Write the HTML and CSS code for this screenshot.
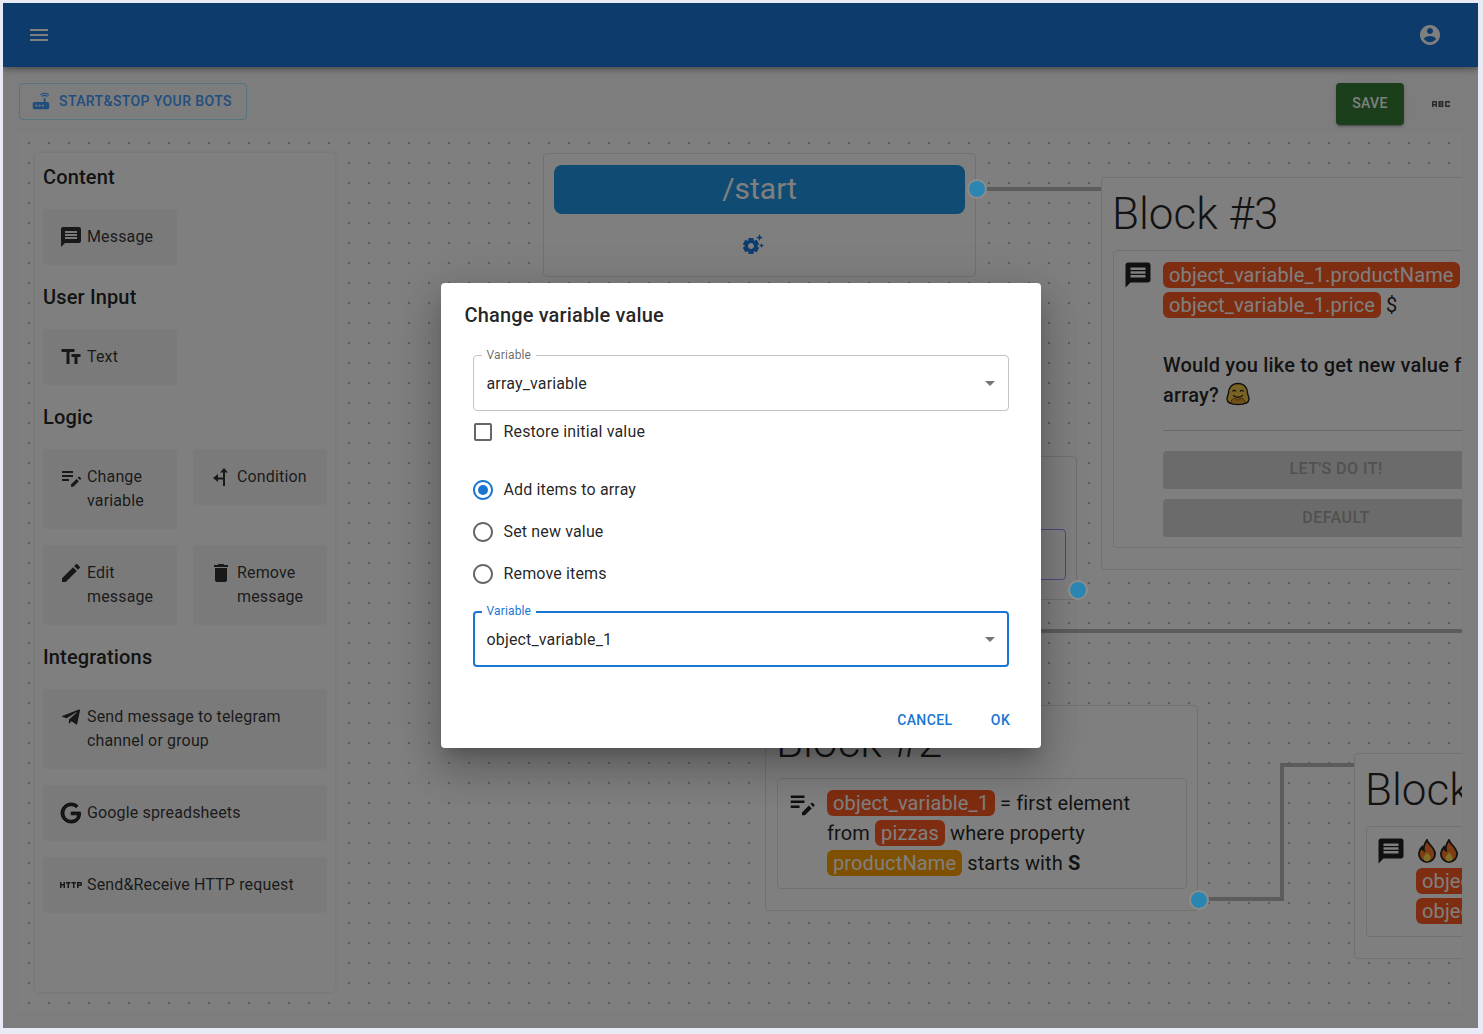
FILE: index.html
```html
<!DOCTYPE html>
<html lang="en">

<head>
    <meta charset="UTF-8">
    <meta name="viewport" content="width=device-width, initial-scale=1.0">
    <title>Bot Builder</title>
    <link rel="stylesheet" href="styles.css">
</head>

<body>
    <!-- icon sprite -->
    <svg class="sprite">
        <symbol id="i-menu" viewBox="0 0 24 24"><path d="M3 18h18v-2H3v2zm0-5h18v-2H3v2zm0-7v2h18V6H3z"/></symbol>
        <symbol id="i-account" viewBox="0 0 24 24"><path d="M12 2C6.48 2 2 6.48 2 12s4.48 10 10 10 10-4.48 10-10S17.52 2 12 2zm0 3c1.66 0 3 1.34 3 3s-1.34 3-3 3-3-1.34-3-3 1.34-3 3-3zm0 14.2c-2.5 0-4.71-1.28-6-3.22.03-1.99 4-3.08 6-3.08 1.99 0 5.97 1.09 6 3.08-1.29 1.94-3.5 3.22-6 3.22z"/></symbol>
        <symbol id="i-router" viewBox="0 0 24 24"><path d="M20.2 5.9l.8-.8C19.6 3.7 17.8 3 16 3s-3.6.7-5 2.1l.8.8C13 4.8 14.5 4.2 16 4.2s3 .6 4.2 1.7zm-.9.8c-.9-.9-2.1-1.4-3.3-1.4s-2.4.5-3.3 1.4l.8.8c.7-.7 1.6-1 2.5-1 .9 0 1.8.3 2.5 1l.8-.8zM19 13h-2V9h-2v4H5c-1.1 0-2 .9-2 2v4c0 1.1.9 2 2 2h14c1.1 0 2-.9 2-2v-4c0-1.1-.9-2-2-2zM8 18H6v-2h2v2zm3.5 0h-2v-2h2v2zm3.5 0h-2v-2h2v2z"/></symbol>
        <symbol id="i-abc" viewBox="0 0 24 24"><path d="M21 11h-1.5v-.5h-2v3h2V13H21v1c0 .55-.45 1-1 1h-3c-.55 0-1-.45-1-1v-4c0-.55.45-1 1-1h3c.55 0 1 .45 1 1v1zM8 10v5H6.5v-1.5h-2V15H3v-5c0-.55.45-1 1-1h3c.55 0 1 .45 1 1zm-1.5.5h-2V12h2v-1.5zm7 1.5c.55 0 1 .45 1 1v1c0 .55-.45 1-1 1h-4V9h4c.55 0 1 .45 1 1v1c0 .55-.45 1-1 1zM11 10.5v.75h2v-.75h-2zm2 2.25h-2v.75h2v-.75z"/></symbol>
        <symbol id="i-message" viewBox="0 0 24 24"><path d="M20 2H4c-1.1 0-1.99.9-1.99 2L2 22l4-4h14c1.1 0 2-.9 2-2V4c0-1.1-.9-2-2-2zm-2 12H6v-2h12v2zm0-3H6V9h12v2zm0-3H6V6h12v2z"/></symbol>
        <symbol id="i-text" viewBox="0 0 24 24"><path d="M2.5 4v3h5v12h3V7h5V4h-13zm19 5h-9v3h3v7h3v-7h3V9z"/></symbol>
        <symbol id="i-editnote" viewBox="0 0 24 24"><path d="M3 10h11v2H3v-2zm0-4h11v2H3V6zm0 8h7v2H3v-2zm15.7-1.2l.7-.7c.4-.4 1-.4 1.4 0l.9.9c.4.4.4 1 0 1.4l-.7.7-2.3-2.3zm-1.2 1.2l2.3 2.3-5.5 5.5H12v-2.3l5.5-5.5z"/></symbol>
        <symbol id="i-condition" viewBox="0 0 24 24"><path d="M14 21V7.5h-3L15 3l4 4.5h-3V21h-2zm0-6.5H9V17l-5-4 5-4v3.5h5v2z"/></symbol>
        <symbol id="i-edit" viewBox="0 0 24 24"><path d="M3 17.25V21h3.75L17.81 9.94l-3.75-3.75L3 17.25zM20.71 7.04c.39-.39.39-1.02 0-1.41l-2.34-2.34c-.39-.39-1.02-.39-1.41 0l-1.83 1.83 3.75 3.75 1.83-1.83z"/></symbol>
        <symbol id="i-delete" viewBox="0 0 24 24"><path d="M6 19c0 1.1.9 2 2 2h8c1.1 0 2-.9 2-2V7H6v12zM19 4h-3.5l-1-1h-5l-1 1H5v2h14V4z"/></symbol>
        <symbol id="i-telegram" viewBox="0 0 24 24"><path d="M9.78 18.65l.28-4.23 7.68-6.92c.34-.31-.07-.46-.52-.19L7.74 13.3 3.64 12c-.88-.25-.89-.86.2-1.3l15.97-6.16c.73-.33 1.43.18 1.15 1.3l-2.72 12.81c-.19.91-.74 1.13-1.5.71L12.6 16.3l-1.99 1.93c-.23.23-.42.42-.83.42z"/></symbol>
        <symbol id="i-google" viewBox="0 0 24 24"><path d="M21.35 11.1h-9.17v2.73h6.51c-.33 3.81-3.5 5.44-6.5 5.44C8.36 19.27 5 16.25 5 12c0-4.1 3.2-7.27 7.2-7.27 3.09 0 4.9 1.97 4.9 1.97L19 4.72S16.56 2 12.1 2C6.42 2 2.03 6.8 2.03 12c0 5.05 4.13 10 10.22 10 5.35 0 9.25-3.67 9.25-9.09 0-1.15-.15-1.81-.15-1.81z" stroke="currentColor" stroke-width="1"/></symbol>
        <symbol id="i-http" viewBox="0 0 24 24"><path d="M4.5 11h-2V9H1v6h1.5v-2.5h2V15H6V9H4.5v2zm2.5-.5h1.5V15H10v-4.5h1.5V9H7v1.5zm5.5 0H14V15h1.5v-4.5H17V9h-4.5v1.5zm9-1.5H18v6h1.5v-2h2c.8 0 1.5-.7 1.5-1.5v-1c0-.8-.7-1.5-1.5-1.5zm0 2.5h-2v-1h2v1z"/></symbol>
        <symbol id="i-gears" viewBox="0 0 24 24"><path d="M17.41 6.59 15 5.5l2.41-1.09L18.5 2l1.09 2.41L22 5.5l-2.41 1.09L18.5 9l-1.09-2.41zm3.87 6.13L20.5 11l-.78 1.72-1.72.78 1.72.78.78 1.72.78-1.72L23 13.5l-1.72-.78zm-5.04 1.65 1.94 1.47-2.5 4.33-2.24-.94c-.2.13-.42.26-.64.37l-.3 2.4h-5l-.3-2.41c-.22-.11-.43-.23-.64-.37l-2.24.94-2.5-4.33 1.94-1.47c-.01-.11-.01-.24-.01-.37s0-.26.01-.37l-1.94-1.47 2.5-4.33 2.24.94c.2-.13.42-.26.64-.37L7.5 6h5l.3 2.41c.22.11.43.23.64.37l2.24-.94 2.5 4.33-1.94 1.47c.01.12.01.24.01.37s0 .25-.01.36zM13 14c0-1.66-1.34-3-3-3s-3 1.34-3 3 1.34 3 3 3 3-1.34 3-3z"/></symbol>
        <symbol id="i-arrow" viewBox="0 0 24 24"><path d="M7 10l5 5 5-5z"/></symbol>
        <symbol id="i-checkbox" viewBox="0 0 24 24"><path d="M19 5v14H5V5h14m0-2H5c-1.1 0-2 .9-2 2v14c0 1.1.9 2 2 2h14c1.1 0 2-.9 2-2V5c0-1.1-.9-2-2-2z"/></symbol>
        <symbol id="i-radio" viewBox="0 0 24 24"><path d="M12 2C6.48 2 2 6.48 2 12s4.48 10 10 10 10-4.48 10-10S17.52 2 12 2zm0 18c-4.42 0-8-3.58-8-8s3.58-8 8-8 8 3.58 8 8-3.58 8-8 8z"/></symbol>
        <symbol id="i-radio-on" viewBox="0 0 24 24"><path d="M12 2C6.48 2 2 6.48 2 12s4.48 10 10 10 10-4.48 10-10S17.52 2 12 2zm0 18c-4.42 0-8-3.58-8-8s3.58-8 8-8 8 3.58 8 8-3.58 8-8 8z"/><circle cx="12" cy="12" r="5"/></symbol>
        <symbol id="i-fire" viewBox="1 0 18 24">
            <path d="M10 1c1 4 7 7 8 13 .6 5-3.5 9-8 9s-8.6-4-8-9c.4-3 2-5 3-6 .3 2 1 3 2 3.5C6 8 8 4 10 1z" fill="#ff7a2a" stroke="#222" stroke-width="1.8"/>
            <path d="M10 13c1 2 4 4 3.5 6.5-.4 2-2 3-3.5 3s-3.2-1-3.5-3C6.2 17 9 15.5 10 13z" fill="#ffe04a"/>
        </symbol>
        <symbol id="i-hug" viewBox="0 0 24 24">
            <path d="M12 1.5C6 1.5 2.5 5.5 2.5 11c0 1.500-1.500 3.500-1.500 6 0 3.500 4 5.500 11 5.500s11-2 11-5.500c0-2.500-1.500-4.500-1.500-6 0-5.500-3.500-9.500-9.500-9.500z" fill="#f6c846" stroke="#222" stroke-width="1.4"/>
            <path d="M6.500 9.500c1-1.500 2.500-1.500 3.500 0M14 9.500c1-1.500 2.500-1.500 3.500 0M7 13c2 3 8 3 10 0" fill="none" stroke="#222" stroke-width="1.300"/>
            <path d="M5 21c0-3 1.500-4.500 3.500-4.500 2 0 3.500 1 3.500 2 0-1 1.500-2 3.500-2 2 0 3.500 1.500 3.500 4.500" fill="#e0a030" stroke="#8a5c10" stroke-width="1"/>
        </symbol>
    </svg>

    <div class="app">
        <header class="appbar">
            <svg class="icon"><use href="#i-menu"/></svg>
            <svg class="icon"><use href="#i-account"/></svg>
        </header>

        <div class="toolbar">
            <button class="bots-btn"><svg class="icon"><use href="#i-router"/></svg>Start&amp;Stop your bots</button>
            <div class="toolbar-right">
                <button class="save-btn">Save</button>
                <svg class="icon abc"><use href="#i-abc"/></svg>
            </div>
        </div>

        <main class="canvas">
            <aside class="panel">
                <h3 class="panel-title">Content</h3>
                <div class="panel-grid">
                    <div class="tool"><svg class="icon"><use href="#i-message"/></svg><span>Message</span></div>
                </div>

                <h3 class="panel-title">User Input</h3>
                <div class="panel-grid">
                    <div class="tool"><svg class="icon"><use href="#i-text"/></svg><span>Text</span></div>
                </div>

                <h3 class="panel-title">Logic</h3>
                <div class="panel-grid">
                    <div class="tool"><svg class="icon"><use href="#i-editnote"/></svg><span>Change variable</span></div>
                    <div class="tool"><svg class="icon"><use href="#i-condition"/></svg><span>Condition</span></div>
                    <div class="tool"><svg class="icon"><use href="#i-edit"/></svg><span>Edit message</span></div>
                    <div class="tool"><svg class="icon"><use href="#i-delete"/></svg><span>Remove message</span></div>
                </div>

                <h3 class="panel-title">Integrations</h3>
                <div class="panel-grid">
                    <div class="tool wide"><svg class="icon"><use href="#i-telegram"/></svg><span>Send message to telegram channel or group</span></div>
                    <div class="tool wide"><svg class="icon"><use href="#i-google"/></svg><span>Google spreadsheets</span></div>
                    <div class="tool wide"><svg class="icon"><use href="#i-http"/></svg><span>Send&amp;Receive HTTP request</span></div>
                </div>
            </aside>

            <!-- connectors between the nodes -->
            <svg class="wires" width="1443" height="879">
                <path d="M966 56H1082"/>
                <path d="M1022 498H1443"/>
                <path d="M1180 766H1263V632H1335"/>
            </svg>

            <section class="node node-start">
                <div class="start-cmd">/start</div>
                <div class="start-icon"><svg class="icon"><use href="#i-gears"/></svg></div>
                <span class="handle handle-start"></span>
            </section>

            <section class="node node-hidden">
                <div class="selected-card"></div>
                <span class="handle handle-hidden"></span>
            </section>

            <section class="node node-3">
                <h2 class="node-title">Block #3</h2>
                <div class="card">
                    <svg class="icon card-icon"><use href="#i-message"/></svg>
                    <div class="card-body">
                        <span class="chip">object_variable_1.productName</span>
                        <span class="chip">object_variable_1.price</span> $<br><br>
                        <b>Would you like to get new value from array?</b>
                        <svg class="hug"><use href="#i-hug"/></svg>
                        <hr class="divider">
                        <div class="reply-btn">Let's do it!</div>
                        <div class="reply-btn">Default</div>
                    </div>
                </div>
            </section>

            <section class="node node-2">
                <h2 class="node-title">Block #2</h2>
                <div class="card">
                    <svg class="icon card-icon"><use href="#i-editnote"/></svg>
                    <div class="card-body">
                        <span class="chip">object_variable_1</span> = first element from
                        <span class="chip">pizzas</span> where property
                        <span class="chip chip-yellow">productName</span> starts with <b class="heavy">S</b>
                    </div>
                </div>
                <span class="handle handle-bottom"></span>
            </section>

            <section class="node node-4">
                <h2 class="node-title">Block #4</h2>
                <div class="card">
                    <svg class="icon card-icon"><use href="#i-message"/></svg>
                    <div class="card-body">
                        <svg class="fire"><use href="#i-fire"/></svg><svg class="fire"><use href="#i-fire"/></svg><svg class="fire"><use href="#i-fire"/></svg><br>
                        <span class="chip">object_variable_1.productName</span><br>
                        <span class="chip">object_variable_1.price</span>
                    </div>
                </div>
            </section>
        </main>

        <div class="overlay">
            <div class="dialog">
                <h2 class="dialog-title">Change variable value</h2>
                <div class="dialog-content">
                    <div class="field">
                        <label class="field-label">Variable</label>
                        <span>array_variable</span>
                        <svg class="icon field-arrow"><use href="#i-arrow"/></svg>
                    </div>

                    <div class="option">
                        <svg class="icon"><use href="#i-checkbox"/></svg>
                        <span>Restore initial value</span>
                    </div>

                    <div class="radios">
                        <div class="option">
                            <svg class="icon on"><use href="#i-radio-on"/></svg>
                            <span>Add items to array</span>
                        </div>
                        <div class="option">
                            <svg class="icon"><use href="#i-radio"/></svg>
                            <span>Set new value</span>
                        </div>
                        <div class="option">
                            <svg class="icon"><use href="#i-radio"/></svg>
                            <span>Remove items</span>
                        </div>
                    </div>

                    <div class="field focused">
                        <label class="field-label">Variable</label>
                        <span>object_variable_1</span>
                        <svg class="icon field-arrow"><use href="#i-arrow"/></svg>
                    </div>
                </div>
                <div class="dialog-actions">
                    <button class="text-btn">Cancel</button>
                    <button class="text-btn">Ok</button>
                </div>
            </div>
        </div>
    </div>
</body>

</html>
```

FILE: styles.css
```css
* {
    box-sizing: border-box;
}

body {
    margin: 0;
    padding: 3px 5px 6px 3px;
    background-color: #e8eaf6;
    font-family: Roboto, "Liberation Sans", sans-serif;
    font-size: 16px;
    letter-spacing: 0.00938em;
    color: rgba(0, 0, 0, 0.87);
}

button {
    font-family: inherit;
    cursor: pointer;
}

.sprite {
    display: none;
}

.icon {
    display: block;
    flex: none;
    width: 24px;
    height: 24px;
    fill: currentColor;
}

.app {
    position: relative;
    display: flex;
    flex-direction: column;
    height: 1025px;
    overflow: hidden;
    background-color: #fafafa;
}

/* top bar */
.appbar {
    display: flex;
    flex: none;
    align-items: center;
    justify-content: space-between;
    height: 64px;
    padding: 0 36px 0 24px;
    background-color: #1976d8;
    color: #fff;
    box-shadow: 0 2px 4px -1px rgba(0, 0, 0, 0.2), 0 4px 5px 0 rgba(0, 0, 0, 0.14), 0 1px 10px 0 rgba(0, 0, 0, 0.12);
}

.toolbar {
    display: flex;
    flex: none;
    justify-content: space-between;
    height: 66px;
    padding: 16px 25px 0 16px;
}

.bots-btn {
    display: flex;
    align-items: center;
    gap: 7px;
    width: 228px;
    height: 37px;
    padding: 0 0 2px 10px;
    background: none;
    border: 1px solid #a8e8ff;
    border-radius: 4px;
    color: #3f9cff;
    font-size: 14px;
    font-weight: 500;
    letter-spacing: 0.02857em;
    text-transform: uppercase;
}

.bots-btn .icon {
    width: 22px;
    height: 22px;
}

.toolbar-right {
    display: flex;
    align-items: flex-start;
    gap: 25px;
}

.save-btn {
    width: 68px;
    height: 42px;
    padding: 0 0 2px;
    background-color: #367f36;
    border: none;
    border-radius: 4px;
    color: #fff;
    font-size: 14px;
    font-weight: 500;
    letter-spacing: 0.02857em;
    text-transform: uppercase;
    box-shadow: 0 3px 1px -2px rgba(0, 0, 0, 0.2), 0 2px 2px 0 rgba(0, 0, 0, 0.14), 0 1px 5px 0 rgba(0, 0, 0, 0.12);
}

.abc {
    margin-top: 9px;
    color: #555;
}

/* editor canvas */
.canvas {
    position: relative;
    flex: 1;
    margin: 0 16px 16px;
    padding: 20px 16px;
    overflow: hidden;
    background-color: #fff;
    background-image: radial-gradient(circle, #bbb 0.9px, transparent 1.1px);
    background-size: 20px 20px;
}

.panel {
    width: 300px;
    height: 839px;
    padding: 8px;
    background-color: #fff;
    border-radius: 4px;
    box-shadow: 0 0 4px rgba(0, 0, 0, 0.12);
}

.panel-title {
    margin: 0 0 16px;
    font-size: 20px;
    font-weight: 500;
    line-height: 32px;
    letter-spacing: 0.0075em;
}

.panel-grid {
    display: grid;
    grid-template-columns: 134px 134px;
    gap: 16px;
    align-items: start;
    margin-bottom: 16px;
}

.tool {
    display: flex;
    gap: 4px;
    padding: 16px;
    background-color: #f5f5f5;
    border-radius: 4px;
    color: rgba(0, 0, 0, 0.8);
    line-height: 24px;
}

.tool.wide {
    grid-column: span 2;
}

.wires {
    position: absolute;
    top: 0;
    left: 0;
    fill: none;
    stroke: #b8b8b8;
    stroke-width: 4;
}

/* nodes of the diagram */
.node {
    position: absolute;
    width: 433px;
    padding: 12px 11px 21px;
    background-color: #fff;
    border: 1px solid #e2e2e2;
    border-radius: 4px;
}

.node-start {
    top: 20px;
    left: 524px;
    height: 124px;
    padding: 11px 10px;
}

.node-hidden {
    top: 323px;
    left: 625px;
    padding-top: 72px;
    padding-bottom: 19px;
}

.node-3 {
    top: 44px;
    left: 1082px;
}

.node-2 {
    top: 572px;
    left: 746px;
}

.node-4 {
    top: 620px;
    left: 1335px;
}

.start-cmd {
    height: 49px;
    background-color: #2196e8;
    border-radius: 8px;
    color: #fff;
    font-size: 30px;
    line-height: 47px;
    letter-spacing: 0;
    text-align: center;
}

.start-icon {
    display: flex;
    justify-content: center;
    margin-top: 18px;
    padding-right: 14px;
    color: #1a78e0;
}

.selected-card {
    width: 410px;
    height: 51px;
    border: 1px solid #9090ff;
    border-radius: 4px;
}

.node-title {
    margin: 0 0 12px -1px;
    font-size: 44px;
    font-weight: 300;
    line-height: 48px;
    letter-spacing: 0;
    white-space: nowrap;
}

.card {
    display: flex;
    gap: 10px;
    width: 410px;
    padding: 9px 13px 10px 9px;
    border: 1px solid #e2e2e2;
    border-radius: 4px;
    font-size: 20px;
    line-height: 30px;
    letter-spacing: 0.12px;
}

.card-icon {
    width: 30px;
    height: 30px;
}

.card-body {
    flex: 1;
    min-width: 0;
}

.card-body b {
    font-weight: 500;
    letter-spacing: 0.2px;
}

.card-body b.heavy {
    font-weight: 700;
}

.chip {
    padding: 1px 6px;
    background-color: #ff5a20;
    border-radius: 6px;
    color: #fff;
}

.chip-yellow {
    background-color: #ffa000;
}

.divider {
    height: 1px;
    margin: 20px 0;
    background-color: #d0d0d0;
    border: none;
}

.reply-btn {
    height: 38px;
    margin-bottom: 10px;
    background-color: #d6d6d6;
    border-radius: 4px;
    color: #a2a2a2;
    font-size: 16px;
    font-weight: 500;
    line-height: 36px;
    letter-spacing: 0.02857em;
    text-align: center;
    text-transform: uppercase;
}

.reply-btn:last-child {
    margin-bottom: 0;
    line-height: 38px;
}

.hug {
    width: 24px;
    height: 24px;
    margin-left: 2px;
    vertical-align: -4px;
}

.fire {
    width: 22px;
    height: 24px;
    vertical-align: -5px;
}

.handle {
    position: absolute;
    right: -12px;
    z-index: 11;
    width: 20px;
    height: 20px;
    background-color: #2a86b0;
    border: 2px solid #8c8c8c;
    border-radius: 50%;
}

.handle-start {
    top: 25px;
}

.handle-hidden {
    bottom: -1px;
}

.handle-bottom {
    bottom: 0;
}

/* dialog */
.overlay {
    position: absolute;
    top: 0;
    left: 0;
    z-index: 10;
    display: flex;
    align-items: center;
    justify-content: center;
    width: 100%;
    height: 100%;
    background-color: rgba(0, 0, 0, 0.5);
}

.dialog {
    width: 600px;
    background-color: #fff;
    border-radius: 4px;
    box-shadow: 0 11px 15px -7px rgba(0, 0, 0, 0.2), 0 24px 38px 3px rgba(0, 0, 0, 0.14), 0 9px 46px 8px rgba(0, 0, 0, 0.12);
}

.dialog-title {
    margin: 0;
    padding: 16px 24px;
    font-size: 20px;
    font-weight: 500;
    line-height: 32px;
    letter-spacing: 0.0075em;
}

.dialog-content {
    padding: 8px 32px 0;
}

.field {
    position: relative;
    display: flex;
    align-items: center;
    justify-content: space-between;
    height: 56px;
    padding: 0 6px 0 13px;
    border: 1px solid #c4c4c4;
    border-radius: 4px;
}

.field.focused {
    padding: 0 5px 0 12px;
    border: 2px solid #1976d2;
}

.field-label {
    position: absolute;
    top: -8px;
    left: 8px;
    padding: 0 5px;
    background-color: #fff;
    color: rgba(0, 0, 0, 0.6);
    font-size: 12px;
    line-height: 15px;
}

.field.focused .field-label {
    top: -9px;
    left: 7px;
    color: #1976d2;
}

.field-arrow {
    color: rgba(0, 0, 0, 0.54);
}

.option {
    display: flex;
    align-items: center;
    gap: 9px;
    height: 42px;
    margin-left: -11px;
    padding-left: 9px;
}

.option span {
    margin-bottom: 2px;
}

.option .icon {
    color: rgba(0, 0, 0, 0.6);
}

.option .icon.on {
    color: #1976d2;
}

.radios {
    margin: 16px 0;
}

.dialog-actions {
    display: flex;
    justify-content: flex-end;
    gap: 8px;
    padding: 35px 8px 10px;
}

.text-btn {
    min-width: 64px;
    height: 36px;
    padding: 0 8px;
    background: none;
    border: none;
    border-radius: 4px;
    color: #1976d2;
    font-size: 14px;
    font-weight: 500;
    letter-spacing: 0.02857em;
    text-transform: uppercase;
}
```
